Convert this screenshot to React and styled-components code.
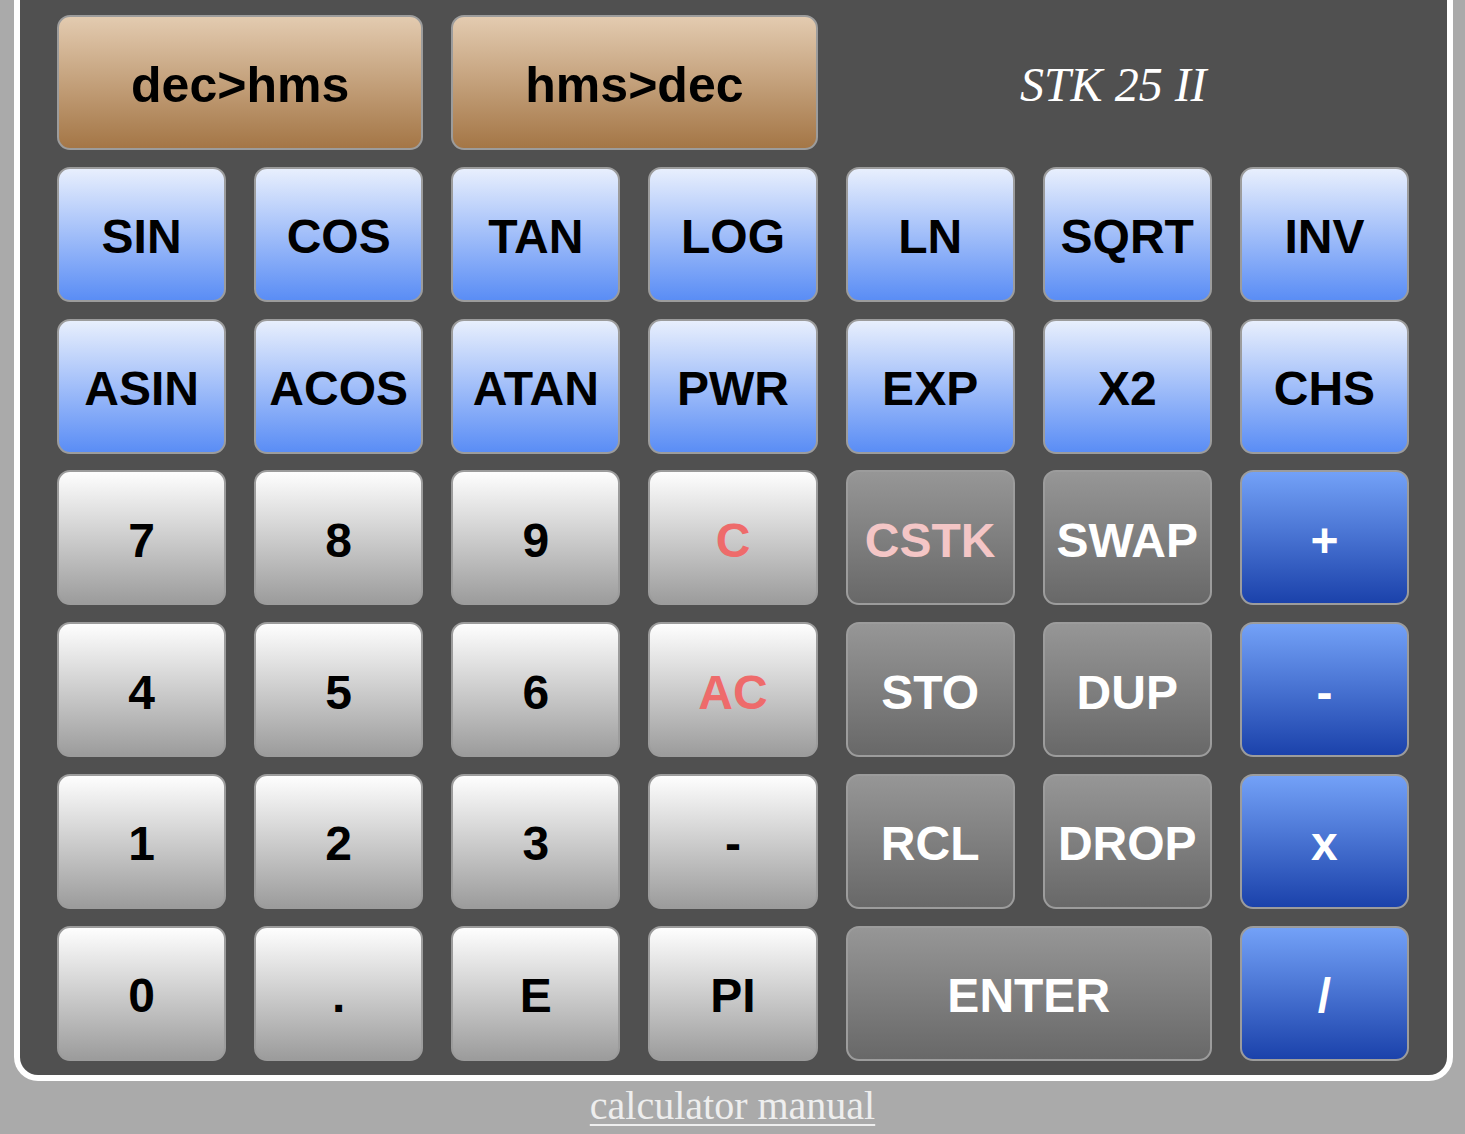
import React from "react";
import styled, { createGlobalStyle, css } from "styled-components";

const Global = createGlobalStyle`
  html, body { margin: 0; padding: 0; background: #aaaaaa; }
  body { overflow: hidden; }
`;

const Page = styled.div`
  width: 1465px;
  height: 1134px;
  overflow: hidden;
  background: #aaaaaa;
`;

const Panel = styled.div`
  box-sizing: border-box;
  width: 1439px;
  margin-left: 14px;
  background: #505050;
  border: 6px solid #ffffff;
  border-top: none;
  border-radius: 0 0 24px 24px;
  padding: 15px 38px 14px 37px;
`;

const Keys = styled.div`
  display: grid;
  grid-template-columns: repeat(7, 1fr);
  grid-auto-rows: 135px;
  column-gap: 28px;
  row-gap: 16.8px;
`;

const variants = {
  brown: css`
    background: linear-gradient(#e3cbb0, #a47646);
    color: #000;
  `,
  func: css`
    background: linear-gradient(#e8effd, #5a8df5);
    color: #000;
  `,
  num: css`
    background: linear-gradient(#fefefe, #9c9c9c);
    color: #000;
  `,
  clear: css`
    background: linear-gradient(#fefefe, #9c9c9c);
    color: #ee6b6b;
  `,
  stack: css`
    background: linear-gradient(#969696, #686868);
    color: #ffffff;
  `,
  stackWarn: css`
    background: linear-gradient(#969696, #686868);
    color: #f4c6c6;
  `,
  op: css`
    background: linear-gradient(#73a1f7, #1b42ab);
    color: #ffffff;
  `,
};

const Key = styled.button`
  box-sizing: border-box;
  grid-column: span ${(p) => p.$span || 1};
  margin: 0;
  padding: 5px 0 0;
  border: 2px solid #9c9c9c;
  border-radius: 13px;
  font-family: "Liberation Sans", Arial, Helvetica, sans-serif;
  font-weight: bold;
  font-size: ${(p) => (p.$kind === "brown" ? "50px" : "48px")};
  display: flex;
  align-items: center;
  justify-content: center;
  cursor: pointer;
  ${(p) => variants[p.$kind]}
`;

const Brand = styled.div`
  grid-column: span 3;
  display: flex;
  align-items: center;
  justify-content: center;
  padding: 4px 28px 0 0;
  color: #ffffff;
  font-family: "Liberation Serif", "Times New Roman", serif;
  font-style: italic;
  font-size: 48px;
`;

const Footer = styled.div`
  text-align: center;
  line-height: 50px;
`;

const ManualLink = styled.a`
  font-family: "Liberation Serif", "Times New Roman", serif;
  font-size: 40px;
  color: #eeeeee;
  text-decoration: underline;
  text-decoration-thickness: 2px;
  text-underline-offset: 5px;
`;

const rows = [
  [
    ["SIN", "func"], ["COS", "func"], ["TAN", "func"], ["LOG", "func"],
    ["LN", "func"], ["SQRT", "func"], ["INV", "func"],
  ],
  [
    ["ASIN", "func"], ["ACOS", "func"], ["ATAN", "func"], ["PWR", "func"],
    ["EXP", "func"], ["X2", "func"], ["CHS", "func"],
  ],
  [
    ["7", "num"], ["8", "num"], ["9", "num"], ["C", "clear"],
    ["CSTK", "stackWarn"], ["SWAP", "stack"], ["+", "op"],
  ],
  [
    ["4", "num"], ["5", "num"], ["6", "num"], ["AC", "clear"],
    ["STO", "stack"], ["DUP", "stack"], ["-", "op"],
  ],
  [
    ["1", "num"], ["2", "num"], ["3", "num"], ["-", "num"],
    ["RCL", "stack"], ["DROP", "stack"], ["x", "op"],
  ],
  [
    ["0", "num"], [".", "num"], ["E", "num"], ["PI", "num"],
    ["ENTER", "stack", 2], ["/", "op"],
  ],
];

export default function App() {
  return (
    <Page>
      <Global />
      <Panel>
        <Keys>
          <Key $kind="brown" $span={2}>dec&gt;hms</Key>
          <Key $kind="brown" $span={2}>hms&gt;dec</Key>
          <Brand>STK 25 II</Brand>
          {rows.map((row, r) =>
            row.map(([label, kind, span], i) => (
              <Key key={`${r}-${i}`} $kind={kind} $span={span}>
                {label}
              </Key>
            ))
          )}
        </Keys>
      </Panel>
      <Footer>
        <ManualLink href="#">calculator manual</ManualLink>
      </Footer>
    </Page>
  );
}
